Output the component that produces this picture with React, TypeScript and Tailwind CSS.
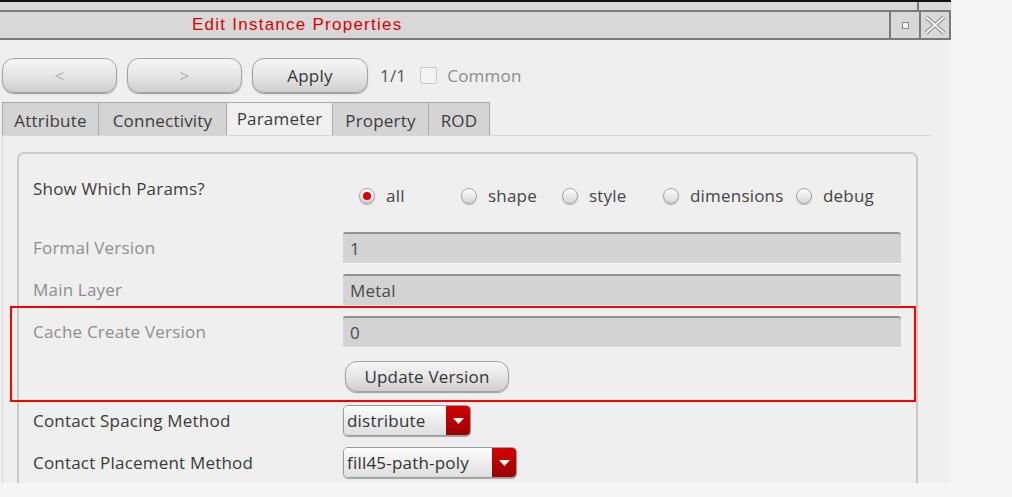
import { useState } from "react";

const tabs = ["Attribute", "Connectivity", "Parameter", "Property", "ROD"];
const tabWidths: Record<string, string> = {
  Attribute: "w-[97px]",
  Connectivity: "w-[128px]",
  Parameter: "w-[106px]",
  Property: "w-[96px]",
  ROD: "w-[61px]",
};

const radios = [
  { id: "all", w: "w-[102px]" },
  { id: "shape", w: "w-[101px]" },
  { id: "style", w: "w-[101px]" },
  { id: "dimensions", w: "w-[133px]" },
  { id: "debug", w: "w-[90px]" },
];

// rounded grey push button
function PillButton({
  children,
  disabled,
  className,
}: {
  children: React.ReactNode;
  disabled?: boolean;
  className?: string;
}) {
  return (
    <button
      className={
        "shrink-0 flex items-center justify-center rounded-[12px] border border-[#a3a3a3] bg-gradient-to-b from-[#f6f6f6] via-[#e6e6e6] to-[#cfcfcf] shadow-[0_1px_1px_#9c9c9c] text-[17px] tracking-[0.2px] " +
        (disabled ? "text-[#b0b0b0] " : "text-[#353535] ") +
        (className ?? "")
      }
    >
      {children}
    </button>
  );
}

function Field({ value }: { value: string }) {
  return (
    <div className="w-[558px] h-[31px] rounded-t-[3px] border-t-2 border-[#929292] bg-[#d3d3d3] shadow-[0_1px_0_#fbfbfb] flex items-center pl-[7px] text-[17px] text-[#4a4a4a]">
      {value}
    </div>
  );
}

function Dropdown({ value, width }: { value: string; width: string }) {
  return (
    <div
      className={
        "h-[31px] flex rounded-[5px] border border-[#9b9b9b] shadow-[0_1px_1px_#a5a5a5] overflow-hidden " +
        width
      }
    >
      <div className="flex-1 flex items-center pl-[3px] bg-gradient-to-b from-[#fdfdfd] to-[#dedede] text-[17px] tracking-[0.2px] text-[#333]">
        {value}
      </div>
      <div className="w-[24px] flex items-center justify-center bg-gradient-to-b from-[#d40000] to-[#9c0000]">
        <svg width="11" height="6" viewBox="0 0 11 6">
          <path d="M0 0 H11 L5.5 6 Z" fill="#fff" />
        </svg>
      </div>
    </div>
  );
}

function Radio({ checked }: { checked: boolean }) {
  return (
    <span className="w-[16px] h-[16px] rounded-full border border-[#a8a8a8] bg-gradient-to-b from-[#ffffff] to-[#d6d6d6] shadow-[0_1px_1px_#b5b5b5] flex items-center justify-center">
      {checked && <span className="w-[8px] h-[8px] rounded-full bg-[#dd0000]" />}
    </span>
  );
}

export default function App() {
  const [which, setWhich] = useState("all");

  return (
    <div className="relative w-[1012px] h-[497px] bg-[#f5f5f5] overflow-hidden font-['Open_Sans',sans-serif] text-[17px] tracking-[0.2px]">
      <div className="w-[951px] h-[483px] bg-[#efefef] flex flex-col overflow-hidden">
        {/* window frame top */}
        <div className="shrink-0 h-[2px] bg-[#111]" />
        <div className="shrink-0 h-[8px] flex bg-[#dadada]">
          <div className="w-[917px]" />
          <div className="flex-1 border-l-2 border-[#777]" />
        </div>
        {/* title bar */}
        <div className="shrink-0 h-[30px] flex border-y-2 border-[#7a7a7a] bg-[#d8d8d8]">
          <div className="w-[889px] flex items-center pl-[192px] font-['Liberation_Sans',sans-serif] text-[17px] tracking-[1.25px] text-[#e00000]">
            Edit Instance Properties
          </div>
          <div className="w-[30px] border-l-2 border-[#7a7a7a] flex items-center justify-center">
            <span className="w-[7px] h-[7px] border border-[#8a8a8a] bg-[#f4f4f4]" />
          </div>
          <div className="flex-1 border-x-2 border-[#7a7a7a] flex items-center justify-center">
            <svg width="22" height="20" viewBox="0 0 22 20">
              <path d="M2 2 L20 18 M20 2 L2 18" stroke="#8a8a8a" strokeWidth="4" />
              <path d="M2 2 L20 18 M20 2 L2 18" stroke="#f2f2f2" strokeWidth="2" />
            </svg>
          </div>
        </div>

        {/* toolbar */}
        <div className="shrink-0 mt-[18px] h-[35px] flex items-center pl-[2px]">
          <PillButton disabled className="w-[115px] h-[35px]">
            &lt;
          </PillButton>
          <PillButton disabled className="ml-[10px] w-[115px] h-[35px]">
            &gt;
          </PillButton>
          <PillButton className="ml-[10px] w-[116px] h-[35px]">Apply</PillButton>
          <span className="ml-[12px] text-[#555]">1/1</span>
          <span className="ml-[14px] w-[17px] h-[17px] border border-[#c9c9c9] rounded-[2px] bg-[#f3f3f3]" />
          <span className="ml-[10px] text-[#8d8d8d]">Common</span>
        </div>

        {/* tabs */}
        <div className="shrink-0 mt-[9px] h-[33px] flex pl-[2px]">
          {tabs.map((t) => {
            const active = t === "Parameter";
            return (
              <div
                key={t}
                className={
                  "h-[33px] border-t border-r border-[#ababab] flex justify-center text-[#3c3c3c] " +
                  tabWidths[t] +
                  (t === "Attribute" ? " border-l" : "") +
                  (active ? " bg-[#f0f0f0] items-start pt-[3px]" : " bg-[#d4d4d4] items-center pt-[3px]")
                }
              >
                {t}
              </div>
            );
          })}
        </div>

        {/* tab pane */}
        <div className="flex-1 min-h-0 overflow-hidden ml-[2px] mr-[20px] border-l border-t border-[#d6d6d6] pt-[16px] pl-[14px]">
          <div className="w-[901px] h-[400px] rounded-t-[7px] border-l-2 border-t-2 border-r-2 border-[#cacaca] pt-[15px] pl-[14px]">
            {/* which params */}
            <div className="h-[63px] flex">
              <div className="w-[310px] mt-[8px] leading-[24px] text-[#3d3d3d]">
                Show Which Params?
              </div>
              <div className="mt-[15px] h-[24px] flex items-center pl-[16px]">
                {radios.map((r) => (
                  <label
                    key={r.id}
                    className={"flex items-center gap-[11px] text-[#444] " + r.w}
                    onClick={() => setWhich(r.id)}
                  >
                    <Radio checked={which === r.id} />
                    {r.id}
                  </label>
                ))}
              </div>
            </div>

            <div className="flex items-center h-[31px]">
              <div className="w-[310px] text-[#8e8e8e]">Formal Version</div>
              <Field value="1" />
            </div>
            <div className="mt-[11px] flex items-center h-[31px]">
              <div className="w-[310px] text-[#8e8e8e]">Main Layer</div>
              <Field value="Metal" />
            </div>
            <div className="mt-[11px] flex items-center h-[31px]">
              <div className="w-[310px] text-[#8e8e8e]">Cache Create Version</div>
              <Field value="0" />
            </div>
            <div className="mt-[14px] flex h-[31px]">
              <div className="w-[312px]" />
              <PillButton className="w-[164px] h-[31px]">Update Version</PillButton>
            </div>
            <div className="mt-[13px] flex items-center h-[31px]">
              <div className="w-[310px] text-[#3a3a3a]">Contact Spacing Method</div>
              <Dropdown value="distribute" width="w-[128px]" />
            </div>
            <div className="mt-[11px] flex items-center h-[31px]">
              <div className="w-[310px] text-[#3a3a3a]">Contact Placement Method</div>
              <Dropdown value="fill45-path-poly" width="w-[174px]" />
            </div>
          </div>
        </div>
      </div>

      {/* red highlight annotation */}
      <div className="absolute left-[10px] top-[306px] w-[906px] h-[96px] border-2 border-[#ff0000]" />
    </div>
  );
}
